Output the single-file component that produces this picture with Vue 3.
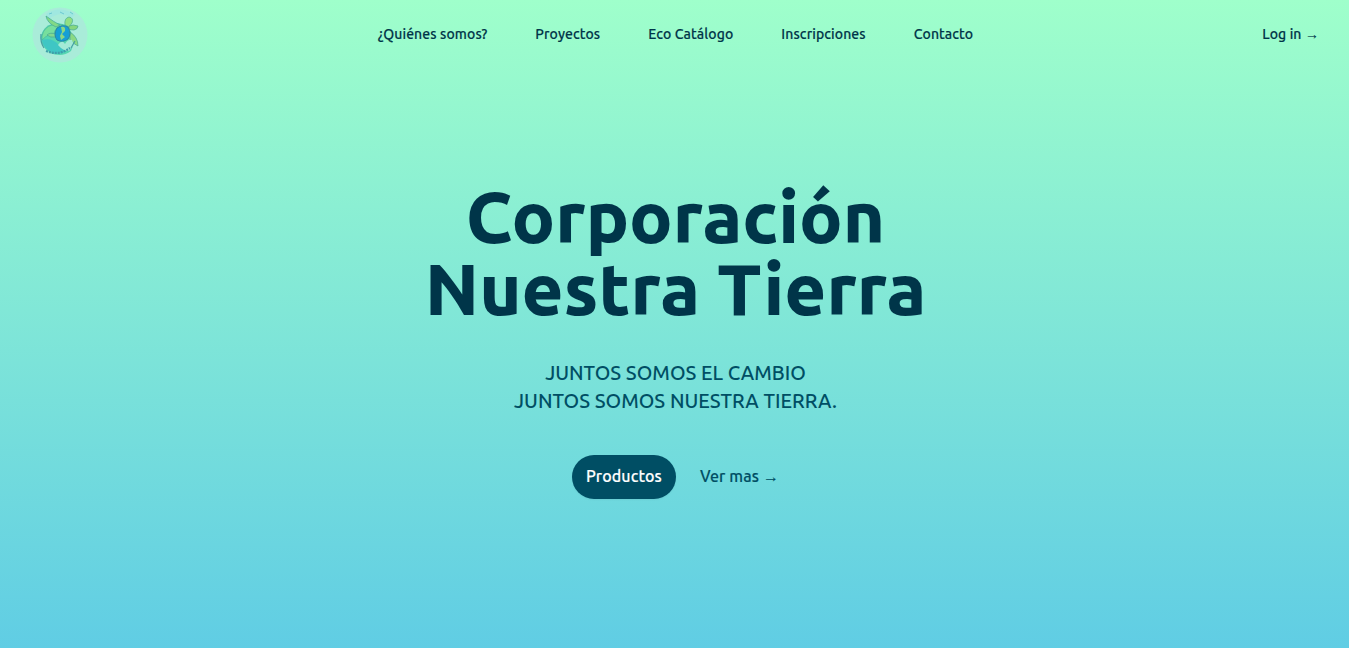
<script setup>
const links = ['¿Quiénes somos?', 'Proyectos', 'Eco Catálogo', 'Inscripciones', 'Contacto']
</script>

<template>
  <div class="page">
    <header class="bar">
      <a class="brand" href="#">
        <svg width="56" height="56" viewBox="0 0 56 56">
          <circle cx="28" cy="28" r="27.5" fill="#a9ecd9" />
          <path d="M14 7Q27-2 43 7L40 11Q28 3 17 12Z" fill="#a0e8e0" />
          <path d="M17 7l3-1M28 5l4 2M38 5l3 2" stroke="#6cc9d2" stroke-width="1" />
          <path d="M9 29Q12 17 25 16L36 18L43 34L39 44Q30 51 18 46Q8 39 9 29Z" fill="#55d6b1" />
          <path d="M10 33Q20 30 27 38L38 40Q32 49 20 46Q11 41 10 33Z" fill="#3fc6c4" />
          <path d="M10 29Q12 20 20 18Q26 16 31 18Q23 20 22 27Q17 26 10 33Z" fill="#77df9d" stroke="#46b5a0" stroke-width=".7" />
          <path d="M28 18Q22 15 14 9Q15 16 24 20Z" fill="#82d985" stroke="#43a997" stroke-width=".7" />
          <path d="M33 18Q32 11 37 10Q42 11 40 16L37 20Z" fill="#91df83" stroke="#4bad94" stroke-width=".7" />
          <path d="M37 19Q41 17 46 19Q46 22 42 23Q39 23 37 22Z" fill="#86d77e" stroke="#48a894" stroke-width=".7" />
          <path d="M38 25Q46 30 46 39Q41 37 38 32Z" fill="#8bd983" stroke="#48a894" stroke-width=".7" />
          <path d="M24 27Q18 25 15 28Q18 31 24 30Z" fill="#81d990" stroke="#48a894" stroke-width=".7" />
          <path d="M25 21Q31 17 36 20Q40 27 36 32Q31 36 25 33Q21 28 25 21Z" fill="#159fd4" stroke="#2b86a0" />
          <path d="M29 20Q34 19 33 24L30 27L33 30L29 33L28 29L30 25Z" fill="#8ad784" />
          <path d="M26 38Q30 32 33 37Q36 32 40 33L42 38L37 44Q31 44 26 38Z" fill="#a4ead6" />
          <path d="M14 44Q27 49 38 41" fill="none" stroke="#3e9faa" stroke-width="2.3" stroke-dasharray="2 1" />
          <path d="M9 27Q8 35 12 41M39 41L43 34" fill="none" stroke="#459fa4" stroke-width="1.2" />
        </svg>
      </a>
      <nav class="links">
        <a v-for="link in links" :key="link" href="#">{{ link }}</a>
      </nav>
      <div class="login"><a href="#">Log in <span>→</span></a></div>
    </header>

    <main class="hero">
      <h1>Corporación<br />Nuestra Tierra</h1>
      <p>JUNTOS SOMOS EL CAMBIO<br />JUNTOS SOMOS NUESTRA TIERRA.</p>
      <div class="actions">
        <a class="primary" href="#">Productos</a>
        <a class="more" href="#">Ver mas <span>→</span></a>
      </div>
    </main>
  </div>
</template>

<style>
body { margin: 0; }
</style>

<style scoped>
.page {
  box-sizing: border-box;
  height: 648px;
  overflow: hidden;
  background: linear-gradient(#9fffcb, #60cde4);
  color: #003549;
  font-family: Ubuntu, "Noto Sans", sans-serif;
}
a { color: inherit; text-decoration: none; }
.bar {
  display: flex;
  align-items: center;
  padding: 7px 30px 0 32px;
  height: 56px;
  font-size: 14px;
  font-weight: 500;
  line-height: 24px;
  letter-spacing: 0.1px;
  -webkit-text-stroke: 0.15px currentColor;
}
.brand, .login { flex: 1; }
.brand svg { display: block; }
.links { display: flex; gap: 48px; margin-top: -2px; }
.login { text-align: right; margin-top: -2px; }
.hero { padding: 118px 0 0 2px; text-align: center; }
h1 {
  margin: 0;
  font-size: 72px;
  font-weight: 800;
  line-height: 72px;
}
p {
  margin: 34px 0 0;
  color: #004e64;
  font-size: 20px;
  font-weight: 500;
  line-height: 28px;
}
.actions {
  display: flex;
  justify-content: center;
  align-items: center;
  gap: 24px;
  margin-top: 40px;
  color: #004e64;
  font-size: 16px;
  font-weight: 500;
  line-height: 24px;
  letter-spacing: 0.12px;
  -webkit-text-stroke: 0.15px currentColor;
}
.primary {
  padding: 9px 14px 11px;
  border-radius: 22px;
  background: #004e64;
  color: #fff;
  box-shadow: 0 1px 2px rgb(0 0 0 / 0.05);
}
.more { padding-bottom: 2px; }
</style>
